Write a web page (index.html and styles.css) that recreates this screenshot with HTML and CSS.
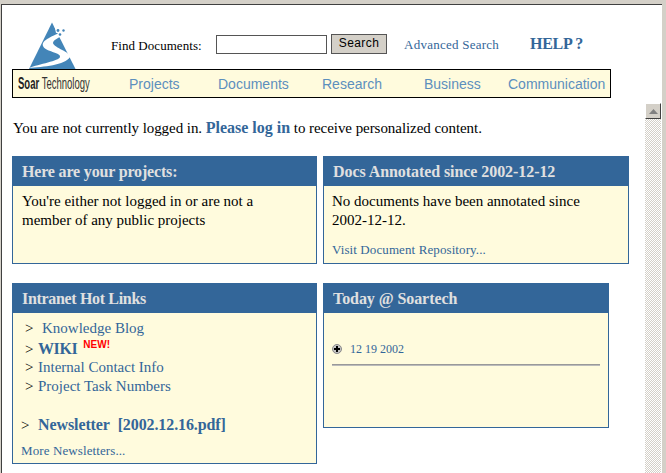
FILE: index.html
```html
<!DOCTYPE html>
<html lang="en">
<head>
<meta charset="utf-8">
<title>Soar Technology Intranet</title>
<link rel="stylesheet" href="styles.css">
</head>
<body>
<div class="window">
  <div class="scrollbar">
    <div class="scroll-up"><svg width="9" height="5" viewBox="0 0 9 5"><path d="M4.5 0 9 5H0z" fill="#808080"/></svg></div>
  </div>
  <header class="top">
    <svg class="logo" width="47" height="47" viewBox="0 0 47 47">
      <path d="M23 0.5 46.5 47H0z" fill="#4385b8"/>
      <path d="M25.500 4 L40 4 L40 15 L36 13 L35 10 L27 11Z" fill="#fff"/>
      <path d="M35 9C24 14 12 18 14 24C16 30 32 30 31 35C30 39 10 42 0 46C14 45 36 43 41 35C42 30 25 26 24 21C24 18 30 15 37 13Z" fill="#fff"/>
      <circle cx="29" cy="8.500" r="1.400" fill="#4385b8"/><circle cx="34.500" cy="8.500" r="1.200" fill="#4385b8"/><circle cx="31" cy="12.500" r="1.300" fill="#4385b8"/>
    </svg>
    <form class="search">
      <label class="search-label">Find Documents:</label>
      <input class="search-input" type="text">
      <button class="search-btn" type="button">Search</button>
    </form>
    <a class="adv" href="#">Advanced Search</a>
    <a class="help" href="#">HELP ?</a>
  </header>
  <nav class="nav">
    <span class="brand"><b>Soar</b> Technology</span>
    <a class="nav-projects" href="#">Projects</a>
    <a class="nav-documents" href="#">Documents</a>
    <a class="nav-research" href="#">Research</a>
    <a class="nav-business" href="#">Business</a>
    <a class="nav-comm" href="#">Communication</a>
  </nav>
  <p class="status">You are not currently logged in. <a href="#">Please log in</a> to receive personalized content.</p>
  <main class="columns">
    <div class="col col-left">
      <section class="card card-a">
        <h2 class="card-head">Here are your projects:</h2>
        <div class="card-body"><p class="plain">You're either not logged in or are not a<br>member of any public projects</p></div>
      </section>
      <section class="card card-c">
        <h2 class="card-head">Intranet Hot Links</h2>
        <div class="card-body links">
          <div class="link l1"><span class="gt">&gt;</span><a href="#">Knowledge Blog</a></div>
          <div class="link l2"><span class="gt">&gt;</span><a class="big" href="#">WIKI</a><sup class="new">NEW!</sup></div>
          <div class="link l3"><span class="gt">&gt;</span><a href="#">Internal Contact Info</a></div>
          <div class="link l4"><span class="gt">&gt;</span><a href="#">Project Task Numbers</a></div>
          <div class="link news"><span class="gt">&gt;</span><a class="strong" href="#">Newsletter&nbsp; [2002.12.16.pdf]</a></div>
          <a class="small-link more" href="#">More Newsletters...</a>
        </div>
      </section>
    </div>
    <div class="col col-right">
      <section class="card card-b">
        <h2 class="card-head">Docs Annotated since 2002-12-12</h2>
        <div class="card-body">
          <p class="plain">No documents have been annotated since<br>2002-12-12.</p>
          <a class="small-link visit" href="#">Visit Document Repository...</a>
        </div>
      </section>
      <section class="card card-d">
        <h2 class="card-head">Today @ Soartech</h2>
        <div class="card-body today">
          <div class="date"><svg class="plus" width="10" height="10" viewBox="0 0 10 10"><circle cx="5" cy="5" r="4.500" fill="#c4c4c4" stroke="#8a8a8a"/><path d="M5 2v6M2 5h6" stroke="#000" stroke-width="2"/></svg><a href="#">12 19 2002</a></div>
          <div class="rule"></div>
        </div>
      </section>
    </div>
  </main>
</div>
</body>
</html>
```
FILE: styles.css
```css
* { box-sizing: border-box; }
html, body { margin: 0; padding: 0; height: 100%; overflow: hidden; background: #fff; }
body { font-family: "Liberation Serif", "Times New Roman", serif; font-size: 15px; color: #000; }
a { color: #336699; text-decoration: none; }

.window {
  position: relative;
  width: 666px;
  height: 473px;
  background: #fff;
  border-top: 4px solid #d4d0c8;
  border-right: 4px solid #d4d0c8;
  border-left: 1px solid #d4d0c8;
  padding: 1px 0 0 0;
  box-shadow: inset 1px 1px 0 #404040;
}
.window::before {
  content: "";
  position: absolute;
  top: 0; left: 0; right: 0;
  height: 1px;
  background: #404040;
}
.scrollbar {
  position: absolute;
  top: 99px;
  left: 644px;
  width: 16px;
  bottom: 0;
  background-color: #eee;
  background-image: repeating-conic-gradient(#d4d0c8 0 25%, #fff 0 50%);
  background-size: 2px 2px;
}
.scroll-up {
  width: 16px;
  height: 16px;
  background: #d4d0c8;
  border: 1px solid;
  border-color: #fff #404040 #404040 #fff;
  display: flex;
  align-items: center;
  justify-content: center;
}

.top { display: flex; align-items: flex-start; height: 64px; padding-left: 28px; }
.logo { margin-top: 17px; flex: none; }
.search { display: flex; align-items: flex-start; margin: 0 0 0 35px; padding-top: 29px; }
.search-label { font-size: 13px; margin-top: 4px; width: 105px; letter-spacing: 0.05px; white-space: nowrap; }
.search-input { width: 111px; height: 19px; margin: 1px 0 0 0; padding: 0; background: #fff; border: 1px solid #555; }
.search-btn {
  width: 56px; height: 20px; margin: 0 0 0 4px; padding: 0 0 2px;
  font-family: "Liberation Sans", Arial, sans-serif; font-size: 12px; letter-spacing: 0.4px;
  background: #d4d0c8; border: 1px solid #555; color: #000;
}
.adv { font-size: 13px; margin: 32px 0 0 17px; letter-spacing: 0.25px; white-space: nowrap; }
.help { font-size: 16px; font-weight: bold; margin: 30px 0 0 31px; letter-spacing: -0.3px; white-space: nowrap; }

.nav {
  position: relative;
  height: 29px;
  width: 599px;
  margin-left: 11px;
  border: 1px solid #000;
  background: #fffbdd;
  display: grid;
  grid-template-columns: 116px 89px 104px 102px 84px auto;
  align-items: center;
  font-family: "Liberation Sans", Arial, sans-serif;
  font-size: 14px;
}
.nav a { color: #5c8fbd; white-space: nowrap; }
.brand {
  display: block;
  font-family: "Liberation Sans", Arial, sans-serif;
  font-size: 17px;
  color: #333;
  white-space: nowrap;
  margin-left: 5px;
  transform: scaleX(0.56);
  transform-origin: left center;
}
.brand b { color: #222; }

.status { margin: 22px 0 0 12px; line-height: 16px; height: 16px; letter-spacing: -0.06px; white-space: nowrap; }
.status a { font-weight: bold; font-size: 16px; letter-spacing: 0; }

.columns { display: flex; gap: 6px; margin: 20px 0 0 11px; align-items: flex-start; }
.col { display: flex; flex-direction: column; gap: 19px; }
.col-left { width: 305px; }
.col-right { width: 306px; }

.card { border: 1px solid #336699; background: #fffbdd; }
.card-a { height: 108px; }
.card-b { height: 108px; }
.card-c { height: 181px; }
.card-d { width: 286px; height: 145px; }
.card-head {
  margin: 0;
  height: 29px;
  background: #336699;
  color: #e0e0e0;
  font-size: 16px;
  font-weight: bold;
  line-height: 30px;
  padding-left: 9px;
  letter-spacing: -0.07px;
  white-space: nowrap;
}
.card-a .card-head { letter-spacing: -0.17px; }
.card-c .card-head { letter-spacing: -0.33px; }
.card-body { padding: 6px 8px 0 9px; }
.card-b .card-body { padding-left: 8px; }
.plain { margin: 0; line-height: 19px; white-space: nowrap; }
.small-link { font-size: 13px; letter-spacing: 0.1px; display: block; white-space: nowrap; }
.visit { margin-top: 12px; }

.links { padding: 0; position: relative; }
.link { display: flex; align-items: baseline; height: 19px; line-height: 19px; white-space: nowrap; }
.gt { font-size: 15px; width: 13px; margin-left: 12px; }
.l1 { margin-top: 6px; }
.l1 a { margin-left: 4px; }
.l2 { margin-top: 1px; }
.big { font-weight: bold; font-size: 16px; letter-spacing: -0.4px; }
.new { font-family: "Liberation Sans", Arial, sans-serif; font-size: 10px; font-weight: bold; color: #f00; margin-left: 6px; position: relative; top: -6px; line-height: 0; vertical-align: baseline; }
.news { margin-top: 19px; }
.news .gt { margin-left: 8px; width: 17px; }
.strong { font-weight: bold; font-size: 16px; letter-spacing: -0.1px; }
.more { margin: 9px 0 0 8px; }

.today { padding: 0 8px; }
.date { display: flex; align-items: center; margin-top: 29px; height: 14px; font-size: 12px; }
.plus { margin-right: 8px; flex: none; }
.rule { margin-top: 8px; height: 2px; background: #999; border-bottom: 1px solid #bbb; width: 268px; }
```
